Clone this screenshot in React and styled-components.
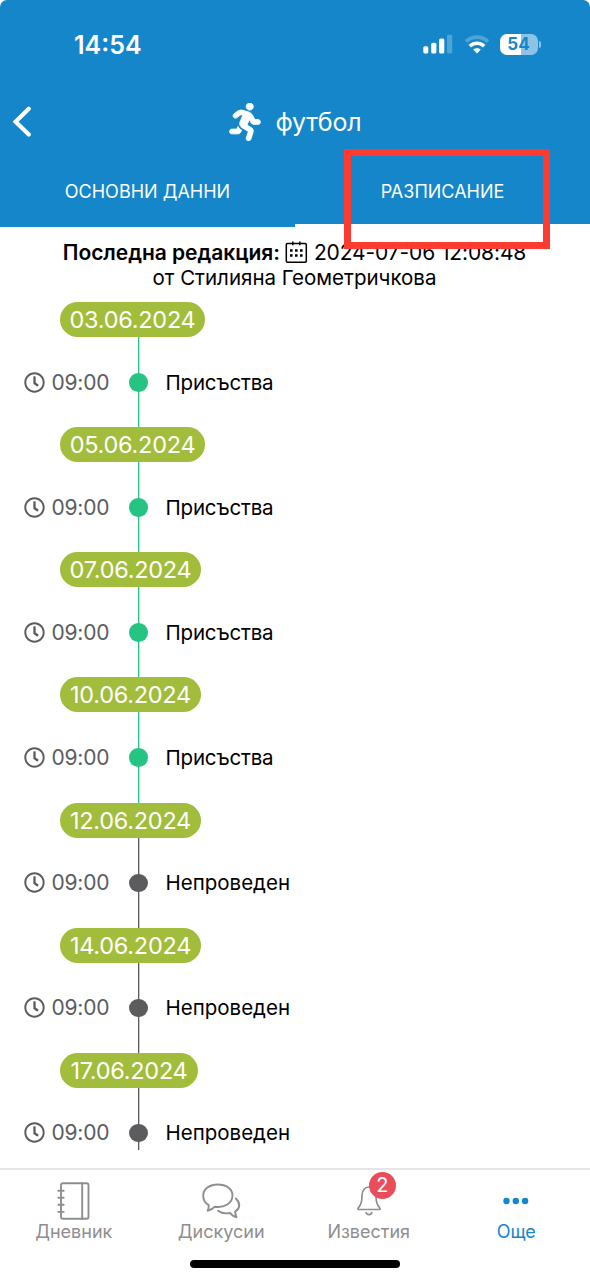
import styled, { createGlobalStyle } from "styled-components";
import { FaRegClock, FaRunning } from "react-icons/fa";

const DAYS = [
  { date: "03.06.2024", width: 145, time: "09:00", status: "Присъства", held: true },
  { date: "05.06.2024", width: 145, time: "09:00", status: "Присъства", held: true },
  { date: "07.06.2024", width: 141, time: "09:00", status: "Присъства", held: true },
  { date: "10.06.2024", width: 141, time: "09:00", status: "Присъства", held: true },
  { date: "12.06.2024", width: 141, time: "09:00", status: "Непроведен" },
  { date: "14.06.2024", width: 141, time: "09:00", status: "Непроведен" },
  { date: "17.06.2024", width: 138, time: "09:00", status: "Непроведен" },
];

const SignalIcon = () => (
  <svg width="30" height="20" viewBox="0 0 30 20" fill="#fff">
    <rect x="0.3" y="12.3" width="5" height="7.2" rx="1.5" />
    <rect x="8.2" y="8.8" width="5.2" height="10.7" rx="1.5" />
    <rect x="16.1" y="4.6" width="5.2" height="14.9" rx="1.5" />
    <rect x="24" y="0.8" width="5.2" height="18.7" rx="1.5" opacity="0.25" />
  </svg>
);

const WifiIcon = () => (
  <svg width="26" height="20" viewBox="0 0 26 20" fill="none" stroke="#fff">
    <path d="M2 7.6C8.1 1.6 17.9 1.6 24 7.6" strokeWidth="3.6" opacity="0.25" />
    <path d="M5.8 12.1C9.9 8.3 16.1 8.3 20.2 12.1" strokeWidth="3.7" />
    <path d="M13 19.4l-3.8-3.8c2.1-1.9 5.5-1.9 7.6 0z" fill="#fff" stroke="none" />
  </svg>
);

const BackIcon = () => (
  <svg width="20" height="32" viewBox="0 0 20 32" fill="none" stroke="#fff" strokeWidth="4.2" strokeLinecap="round" strokeLinejoin="miter">
    <path d="M16.8 2.8L3.6 15.8L16.8 28.6" />
  </svg>
);

const CalendarIcon = () => (
  <svg width="23" height="23" viewBox="0 0 23 23" fill="none" stroke="#000" strokeWidth="1.5">
    <rect x="1.3" y="2.6" width="20" height="18.6" rx="1.2" />
    <path d="M7.8 0.4v3.8M14.8 0.4v3.8" />
    <path d="M5 9.6h2.6M10 9.6h2.6M15 9.6h2.6M5 14.6h2.6M10 14.6h2.6M15 14.6h2.6" strokeWidth="2.5" />
  </svg>
);

const DiaryIcon = () => (
  <svg width="34" height="40" viewBox="0 0 34 40" fill="none" stroke="#8e8e8e" strokeWidth="1.9" strokeLinecap="round">
    <rect x="4" y="2.2" width="27.5" height="35.6" rx="2" />
    <path d="M25.2 2.2v35.6M1.3 9.7h5.4M1.3 16.8h5.4M1.3 23.8h5.4M1.3 30.9h5.4" />
  </svg>
);

const ChatIcon = () => (
  <svg width="40" height="40" viewBox="0 0 40 40" fill="none" stroke="#8e8e8e" strokeWidth="1.9" strokeLinecap="round" strokeLinejoin="round">
    <path d="M16.8 3.5C8.6 3.5 2.2 8.1 2.2 14.6c0 4.6 2.1 7.7 5.5 9.6.2 2.1-.2 3.7-1.1 5.5 3.3-.7 5.4-2.1 6.9-3.9 10.2 1.4 18-3.7 18-11.2 0-6.6-6.4-11.1-14.7-11.1z" />
    <path d="M34.8 17.5c4.9 4.6 4.4 10.1-.6 13.1 0 2.2.3 3.7 1.3 5.6-2.6-.5-4.7-1.9-6.3-4.2-4.6.9-8.9.3-12.1-2.3" />
  </svg>
);

const BellIcon = () => (
  <svg width="26" height="33" viewBox="0 0 26 33" fill="none" stroke="#8e8e8e" strokeWidth="1.7" strokeLinecap="round" strokeLinejoin="round">
    <path d="M13 2C8.6 2 6 5.5 6 11c0 6.600-1.100 9.200-3.700 11.800-.7.7-.4 1.700.6 1.700h20.200c1 0 1.300-1 .6-1.700C21.100 20.200 20 17.600 20 11 20 5.500 17.400 2 13 2z" />
    <path d="M10.200 27.700c.5 2.600 5.100 2.600 5.600 0" />
  </svg>
);

const MoreIcon = () => (
  <svg width="26" height="8" viewBox="0 0 26 8" fill="#1486c9">
    <circle cx="3.5" cy="4" r="3.2" />
    <circle cx="12.8" cy="4" r="3.2" />
    <circle cx="22.1" cy="4" r="3.2" />
  </svg>
);

const Day = ({ day, last }) => (
  <>
    <DateRow>
      <DatePill $width={day.width}>{day.date}</DatePill>
    </DateRow>
    <Event $last={last}>
      <Time>
        <FaRegClock size={21} />
        <TimeText>{day.time}</TimeText>
      </Time>
      <Track $color={day.held ? "#25c483" : "#5c5c5e"}>
        <Dot $color={day.held ? "#25c483" : "#5c5c5e"} />
      </Track>
      <Status $held={day.held}>{day.status}</Status>
    </Event>
  </>
);

export default function App() {
  return (
    <Screen>
      <GlobalStyle />
      <Header>
        <StatusBar>
          <Clock>14:54</Clock>
          <Indicators>
            <SignalIcon />
            <WifiIcon />
            <Battery>
              <BatteryBody>54</BatteryBody>
              <BatteryTip />
            </Battery>
          </Indicators>
        </StatusBar>
        <TitleBar>
          <BackButton>
            <BackIcon />
          </BackButton>
          <RunningIcon size={38} />
          <Title>футбол</Title>
        </TitleBar>
        <Tabs>
          <Tab>
            <TabLabel>ОСНОВНИ ДАННИ</TabLabel>
          </Tab>
          <Tab $active>
            <TabLabel>РАЗПИСАНИЕ</TabLabel>
            <Highlight />
          </Tab>
        </Tabs>
      </Header>
      <Edited>
        <EditedLine>
          <EditedLabel>Последна редакция:</EditedLabel>
          <CalendarIcon />
          <EditedDate>2024-07-06 12:08:48</EditedDate>
        </EditedLine>
        <EditedLine>
          <Author>от Стилияна Геометричкова</Author>
        </EditedLine>
      </Edited>
      <Schedule>
        {DAYS.map((day, index) => (
          <Day key={day.date} day={day} last={index === DAYS.length - 1} />
        ))}
      </Schedule>
      <TabBar>
        <NavItem>
          <NavIcon>
            <DiaryIcon />
          </NavIcon>
          <NavLabel>Дневник</NavLabel>
        </NavItem>
        <NavItem>
          <NavIcon>
            <ChatIcon />
          </NavIcon>
          <NavLabel>Дискусии</NavLabel>
        </NavItem>
        <NavItem>
          <NavIcon>
            <BellIcon />
            <Badge>2</Badge>
          </NavIcon>
          <NavLabel>Известия</NavLabel>
        </NavItem>
        <NavItem $active>
          <NavIcon>
            <MoreIcon />
          </NavIcon>
          <NavLabel>Още</NavLabel>
        </NavItem>
      </TabBar>
      <HomeIndicator />
    </Screen>
  );
}

const GlobalStyle = createGlobalStyle`
  * {
    box-sizing: border-box;
  }
  body {
    margin: 0;
    background: #ffffff;
  }
  svg {
    display: block;
    flex-shrink: 0;
  }
`;
const Screen = styled.div`
  width: 590px;
  height: 1280px;
  display: flex;
  flex-direction: column;
  overflow: hidden;
  background: #ffffff;
  color: #000000;
  font-family: Inter, "Liberation Sans", sans-serif;
  white-space: nowrap;
`;
const Header = styled.header`
  height: 227px;
  flex-shrink: 0;
  background: #1486c9;
  color: #ffffff;
  border-radius: 7px 7px 0 0;
`;
const StatusBar = styled.div`
  height: 88px;
  display: flex;
  align-items: center;
  justify-content: space-between;
  padding: 0 49.5px 0 74px;
`;
const Clock = styled.span`
  font-size: 25px;
  font-weight: 600;
  line-height: 30px;
  padding-top: 1px;
`;
const Indicators = styled.div`
  display: flex;
  align-items: center;
  gap: 10.7px;
`;
const Battery = styled.div`
  display: flex;
  align-items: center;
  gap: 1px;
  margin-left: -1px;
`;
const BatteryBody = styled.div`
  width: 38px;
  height: 21px;
  border-radius: 7px;
  background: linear-gradient(to right, #ffffff 54%, #8dc4e6 54%);
  color: #1486c9;
  font-size: 17px;
  font-weight: 700;
  line-height: 21px;
  text-align: center;
`;
const BatteryTip = styled.div`
  width: 2px;
  height: 7px;
  border-radius: 0 2px 2px 0;
  background: #8dc4e6;
`;
const TitleBar = styled.div`
  height: 68px;
  position: relative;
  display: flex;
  align-items: center;
  justify-content: center;
  gap: 11.5px;
  padding-right: 2.5px;
`;
const BackButton = styled.div`
  position: absolute;
  left: 12px;
  top: 18px;
`;
const RunningIcon = styled(FaRunning)`
  stroke: #ffffff;
  stroke-width: 12px;
`;
const Title = styled.h1`
  margin: 0;
  font-size: 25px;
  font-weight: 400;
  line-height: 30px;
  letter-spacing: -0.15px;
`;
const Tabs = styled.div`
  display: flex;
  height: 71px;
`;
const Tab = styled.div`
  position: relative;
  flex: 1;
  display: flex;
  align-items: center;
  justify-content: center;
  padding-top: 4px;
  border-bottom: 3px solid ${({ $active }) => ($active ? "#ffffff" : "#1486c9")};
`;
const TabLabel = styled.span`
  font-size: 18px;
  line-height: 22px;
`;
const Highlight = styled.div`
  position: absolute;
  left: 49px;
  top: -7px;
  width: 206px;
  height: 100px;
  border: 7px solid #fe3b30;
`;
const Edited = styled.div`
  height: 75px;
  padding-top: 12.5px;
  padding-right: 1px;
  flex-shrink: 0;
`;
const EditedLine = styled.div`
  height: 25.5px;
  display: flex;
  align-items: center;
  justify-content: center;
  font-size: 21px;
`;
const EditedLabel = styled.span`
  font-weight: 600;
  margin-right: 5px;
  letter-spacing: -0.03px;
`;
const EditedDate = styled.span`
  margin-left: 6px;
  letter-spacing: -0.12px;
`;
const Author = styled.span`
  font-size: 20.5px;
`;
const Schedule = styled.div`
  height: 866px;
  flex-shrink: 0;
`;
const DateRow = styled.div`
  padding-left: 60px;
`;
const DatePill = styled.div`
  width: ${({ $width }) => $width}px;
  height: 35px;
  display: flex;
  align-items: center;
  justify-content: center;
  border-radius: 18px;
  background: #a2bc3b;
  color: #ffffff;
  font-size: 23.5px;
  letter-spacing: -0.27px;
`;
const Event = styled.div`
  height: ${({ $last }) => ($last ? 62.5 : 90.17)}px;
  display: grid;
  grid-template-columns: 129px 19px 1fr;
  grid-template-rows: 100%;
`;
const Time = styled.div`
  height: 90px;
  display: flex;
  align-items: center;
  padding-left: 24px;
  gap: 6.5px;
  color: #5c5c5e;
`;
const TimeText = styled.span`
  font-size: 21px;
  letter-spacing: -0.2px;
`;
const Track = styled.div`
  padding-top: 36px;
  background: linear-gradient(
      to right,
      transparent 9px,
      ${({ $color }) => `${$color} 9px, ${$color} 10px, ${$color}55 10px, ${$color}55 11px`},
      transparent 11px
    );
`;
const Dot = styled.div`
  width: 18.5px;
  height: 18.5px;
  border-radius: 50%;
  background: ${({ $color }) => $color};
`;
const Status = styled.div`
  height: 90px;
  display: flex;
  align-items: center;
  padding-left: 17.5px;
  font-size: 20.5px;
  letter-spacing: ${({ $held }) => ($held ? "-0.18px" : "0")};
`;
const TabBar = styled.nav`
  height: 84px;
  flex-shrink: 0;
  display: flex;
  border-top: 2px solid #e5e5e5;
`;
const NavItem = styled.div`
  flex: 1;
  display: flex;
  flex-direction: column;
  align-items: center;
  padding-top: 11px;
  color: ${({ $active }) => ($active ? "#1486c9" : "#8e8e8e")};
`;
const NavIcon = styled.div`
  position: relative;
  height: 40px;
  display: flex;
  align-items: center;
`;
const NavLabel = styled.span`
  font-size: 18px;
  line-height: 22px;
`;
const Badge = styled.span`
  position: absolute;
  left: 13px;
  top: -9px;
  width: 27px;
  height: 27px;
  border-radius: 50%;
  background: #e94c5b;
  color: #ffffff;
  font-size: 20px;
  line-height: 27px;
  text-align: center;
`;
const HomeIndicator = styled.div`
  width: 210px;
  height: 8px;
  margin: 8px auto 0;
  border-radius: 4px;
  background: #000000;
`;
